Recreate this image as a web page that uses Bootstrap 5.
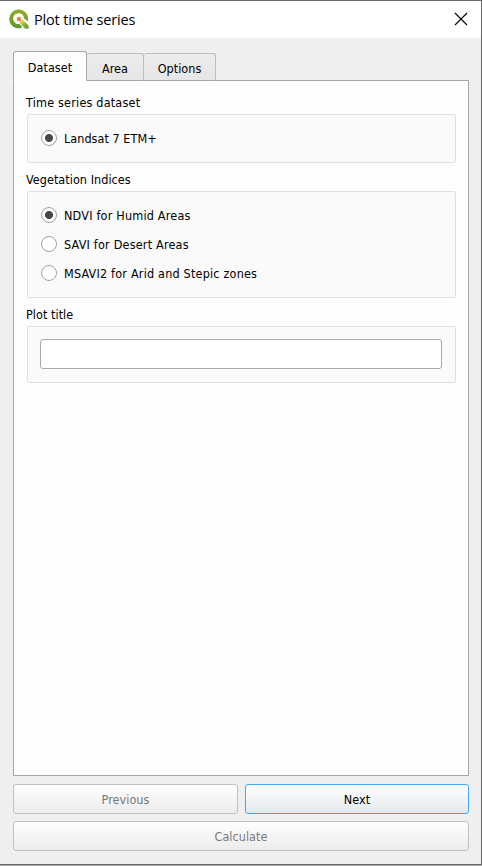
<!DOCTYPE html>
<html lang="en">
<head>
<meta charset="utf-8">
<meta name="viewport" content="width=device-width, initial-scale=1">
<title>Plot time series</title>
<link href="https://cdn.jsdelivr.net/npm/bootstrap@5.3.0/dist/css/bootstrap.min.css" rel="stylesheet">
<style>
html,body{height:100%;overflow:hidden}
body{font-family:"DejaVu Sans Condensed","DejaVu Sans",sans-serif;font-stretch:condensed;font-size:12.5px;line-height:16px;letter-spacing:.05px;color:#000;background:#a8a8a8}
.dialog{width:482px;height:865px;background:#efefef;border:solid #6a6a6a;border-width:1px 1px 1px 0}
.titlebar{height:37px;background:#fff;padding:0 13px 1px 9px}
.caption{font:14.5px/20px "Open Sans",sans-serif;margin-left:5px;padding-top:2px;letter-spacing:-.17px}
.content{padding:13px 12px 13px 13px}
.tabs{height:30px;margin-bottom:-1px;z-index:1}
.tabs .nav-link{height:28px;padding:7px 0 0;color:#000;background:linear-gradient(#ececec,#e6e6e6);border:1px solid #bdbdbd;border-left:0;border-bottom-color:#a8a8a8;border-radius:3px 3px 0 0;text-align:center}
.tabs .nav-link.active{width:74px;height:30px;padding-top:8px;background:#fdfdfd;border:1px solid #a8a8a8;border-bottom-color:#fdfdfd}
.tab-area{width:57px}
.tab-options{width:72px}
.pane{background:#fdfdfd;border:1px solid #a8a8a8;padding:14px 12px 0}
.group{margin-left:1px;background:#fafafa;border:1px solid #e0e0e0;border-radius:2px;padding:8px 13px 0}
.group-label{height:19px}
.group + .group-label{margin-top:9px}
.group-one{height:49px}
.group-three{height:107px}
.group-title{height:57px;padding:12px 13px 0 12px}
.choice{height:29px;gap:7px}
.choice span{padding-top:2px}
.wide{letter-spacing:.2px}
.choice .form-check-input{width:16px;height:16px;margin:0;background:#fff;border:1px solid #a0a0a0;box-shadow:none}
.choice .form-check-input:checked{background:radial-gradient(circle,#484848 0 3.6px,#fff 4.4px)}
.field{height:30px;border:1px solid #a8a8a8;border-radius:3px;font:inherit;padding:0 6px;background:#fff}
.actions{gap:7px;margin-top:8px}
.pair{gap:7px}
.prev{width:225px}
.push{--bs-btn-disabled-opacity:1;height:30px;padding:1px 0 0;font-size:12.5px;line-height:28px;letter-spacing:.05px;color:#000;border:1px solid #c1c1c1;border-radius:3px;background:linear-gradient(#fefefe,#ececec)}
.push:disabled{color:#787878;border-color:#c1c1c1;background:linear-gradient(#fefefe,#ececec)}
.push-default{border-color:#43a9f5;background:linear-gradient(#fff,#e3e9ed)}
</style>
<script src="https://cdn.jsdelivr.net/npm/bootstrap@5.3.0/dist/js/bootstrap.bundle.min.js" defer></script>
</head>
<body>
<div class="dialog d-flex flex-column">
  <header class="titlebar d-flex align-items-center">
    <svg width="20" height="20" viewBox="0.6 0.3 19 19">
      <defs>
        <linearGradient id="leaf" x1="0" y1="0" x2="0" y2="1"><stop offset="0" stop-color="#93b023"/><stop offset="1" stop-color="#589632"/></linearGradient>
        <linearGradient id="tail" x1="0" y1="0" x2="1" y2="1"><stop offset=".1" stop-color="#f0e05a"/><stop offset=".55" stop-color="#8bb03a"/><stop offset="1" stop-color="#589632"/></linearGradient>
      </defs>
      <path d="M12.3 18.3A9 9 0 1 1 18.5 12L14.9 9.3A5.2 5.2 0 1 0 10.4 14.6L13 17.2Z" fill="url(#leaf)"/>
      <path d="M10.6 10.6h3l5.6 5.4v3h-3.1l-5.5-5.4z" fill="url(#tail)"/>
      <circle cx="10" cy="9.8" r="2.1" fill="#ee7f3a"/>
    </svg>
    <span class="caption">Plot time series</span>
    <svg class="ms-auto" width="14" height="14" viewBox="0 0 14 14"><path d="M1 1l12 12M13 1L1 13" stroke="#000" stroke-width="1.1" fill="none"/></svg>
  </header>
  <main class="content flex-grow-1 d-flex flex-column">
    <nav class="tabs nav d-flex align-items-end position-relative">
      <a class="nav-link active" href="#">Dataset</a>
      <a class="nav-link tab-area" href="#">Area</a>
      <a class="nav-link tab-options" href="#">Options</a>
    </nav>
    <section class="pane flex-grow-1">
      <div class="group-label wide">Time series dataset</div>
      <div class="group group-one">
        <label class="choice d-flex align-items-center"><input class="form-check-input" type="radio" name="dataset" checked><span>Landsat 7 ETM+</span></label>
      </div>
      <div class="group-label">Vegetation Indices</div>
      <div class="group group-three">
        <label class="choice d-flex align-items-center"><input class="form-check-input" type="radio" name="index" checked><span class="wide">NDVI for Humid Areas</span></label>
        <label class="choice d-flex align-items-center"><input class="form-check-input" type="radio" name="index"><span class="wide">SAVI for Desert Areas</span></label>
        <label class="choice d-flex align-items-center"><input class="form-check-input" type="radio" name="index"><span class="wide">MSAVI2 for Arid and Stepic zones</span></label>
      </div>
      <div class="group-label">Plot title</div>
      <div class="group group-title"><input class="field d-block w-100" type="text" aria-label="Plot title"></div>
    </section>
    <footer class="d-flex flex-column actions">
      <div class="d-flex pair">
        <button class="btn push prev" disabled>Previous</button>
        <button class="btn push push-default flex-grow-1">Next</button>
      </div>
      <button class="btn push w-100" disabled>Calculate</button>
    </footer>
  </main>
</div>
</body>
</html>
